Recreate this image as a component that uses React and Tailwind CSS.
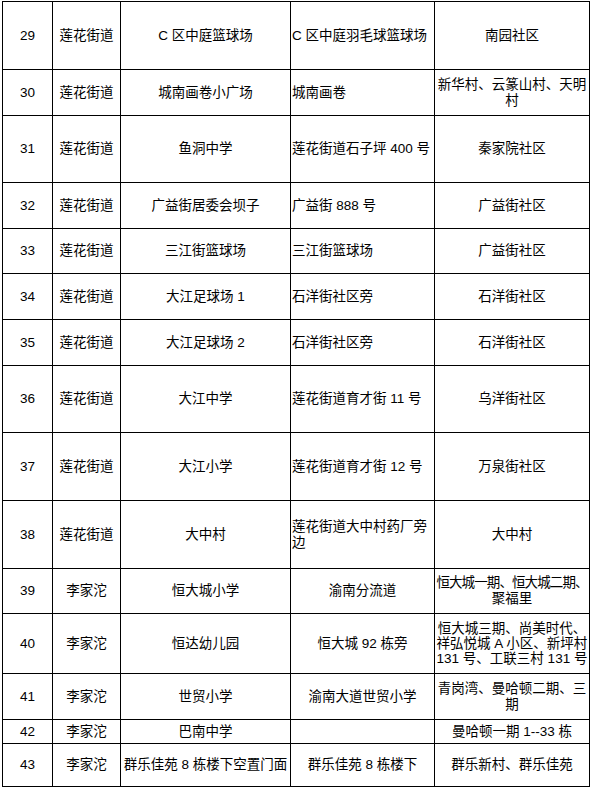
import React from "react";

const rows = [
  { h: "h-[68px]", n: "29", a: "莲花街道", b: "C 区中庭篮球场", c: ["C 区中庭羽毛球篮球场"], cl: true, d: ["南园社区"] },
  { h: "h-[46px]", n: "30", a: "莲花街道", b: "城南画卷小广场", c: ["城南画卷"], cl: true, d: ["新华村、云篆山村、天明", "村"] },
  { h: "h-[67px]", n: "31", a: "莲花街道", b: "鱼洞中学", c: ["莲花街道石子坪 400 号"], cl: true, d: ["秦家院社区"] },
  { h: "h-[46px]", n: "32", a: "莲花街道", b: "广益街居委会坝子", c: ["广益街 888 号"], cl: true, d: ["广益街社区"] },
  { h: "h-[45px]", n: "33", a: "莲花街道", b: "三江街篮球场", c: ["三江街篮球场"], cl: true, d: ["广益街社区"] },
  { h: "h-[46px]", n: "34", a: "莲花街道", b: "大江足球场 1", c: ["石洋街社区旁"], cl: true, d: ["石洋街社区"] },
  { h: "h-[46px]", n: "35", a: "莲花街道", b: "大江足球场 2", c: ["石洋街社区旁"], cl: true, d: ["石洋街社区"] },
  { h: "h-[67px]", n: "36", a: "莲花街道", b: "大江中学", c: ["莲花街道育才街 11 号"], cl: true, d: ["乌洋街社区"] },
  { h: "h-[68px]", n: "37", a: "莲花街道", b: "大江小学", c: ["莲花街道育才街 12 号"], cl: true, d: ["万泉街社区"] },
  { h: "h-[68px]", n: "38", a: "莲花街道", b: "大中村", c: ["莲花街道大中村药厂旁", "边"], cl: true, d: ["大中村"] },
  { h: "h-[45px]", n: "39", a: "李家沱", b: "恒大城小学", c: ["渝南分流道"], cl: false, d: ["恒大城一期、恒大城二期、", "聚福里"], tight: true },
  { h: "h-[60px]", n: "40", a: "李家沱", b: "恒达幼儿园", c: ["恒大城 92 栋旁"], cl: false, d: ["恒大城三期、尚美时代、", "祥弘悦城 A 小区、新坪村", "131 号、工联三村 131 号"], lh: true },
  { h: "h-[46px]", n: "41", a: "李家沱", b: "世贸小学", c: ["渝南大道世贸小学"], cl: false, d: ["青岗湾、曼哈顿二期、三", "期"] },
  { h: "h-[24px]", n: "42", a: "李家沱", b: "巴南中学", c: [""], cl: false, d: ["曼哈顿一期 1--33 栋"] },
  { h: "h-[43px]", n: "43", a: "李家沱", b: "群乐佳苑 8 栋楼下空置门面", c: ["群乐佳苑 8 栋楼下"], cl: false, d: ["群乐新村、群乐佳苑"] },
];

function Cell({ children, left, extra = "" }) {
  return (
    <div
      className={`border-r border-black flex flex-col justify-center overflow-visible ${
        left ? "items-start pl-px" : "items-center text-center"
      } ${extra}`}
    >
      {children}
    </div>
  );
}

export default function App() {
  return (
    <div className="bg-white w-[595px] h-[792px] pt-px pl-[2px] text-black text-[13.5px] leading-[16px] font-['Liberation_Sans','Noto_Sans_CJK_SC',sans-serif]">
      <div className="flex flex-col w-[588px] border-l border-t border-black">
        {rows.map((r) => (
          <div
            key={r.n}
            className={`grid grid-cols-[50px_68px_170px_144px_155px] border-b border-black ${r.h}`}
          >
            <Cell>{r.n}</Cell>
            <Cell>
              <span className="whitespace-nowrap">{r.a}</span>
            </Cell>
            <Cell>
              <span className="whitespace-nowrap">{r.b}</span>
            </Cell>
            <Cell left={r.cl}>
              {r.c.map((t, i) => (
                <span key={i} className="whitespace-nowrap">
                  {t}
                </span>
              ))}
            </Cell>
            <Cell>
              {r.d.map((t, i) => (
                <span
                  key={i}
                  className={`whitespace-nowrap ${
                    r.tight && i === 0 ? "tracking-[-0.9px]" : ""
                  } ${r.lh ? "leading-[15px]" : ""}`}
                >
                  {t}
                </span>
              ))}
            </Cell>
          </div>
        ))}
      </div>
    </div>
  );
}
